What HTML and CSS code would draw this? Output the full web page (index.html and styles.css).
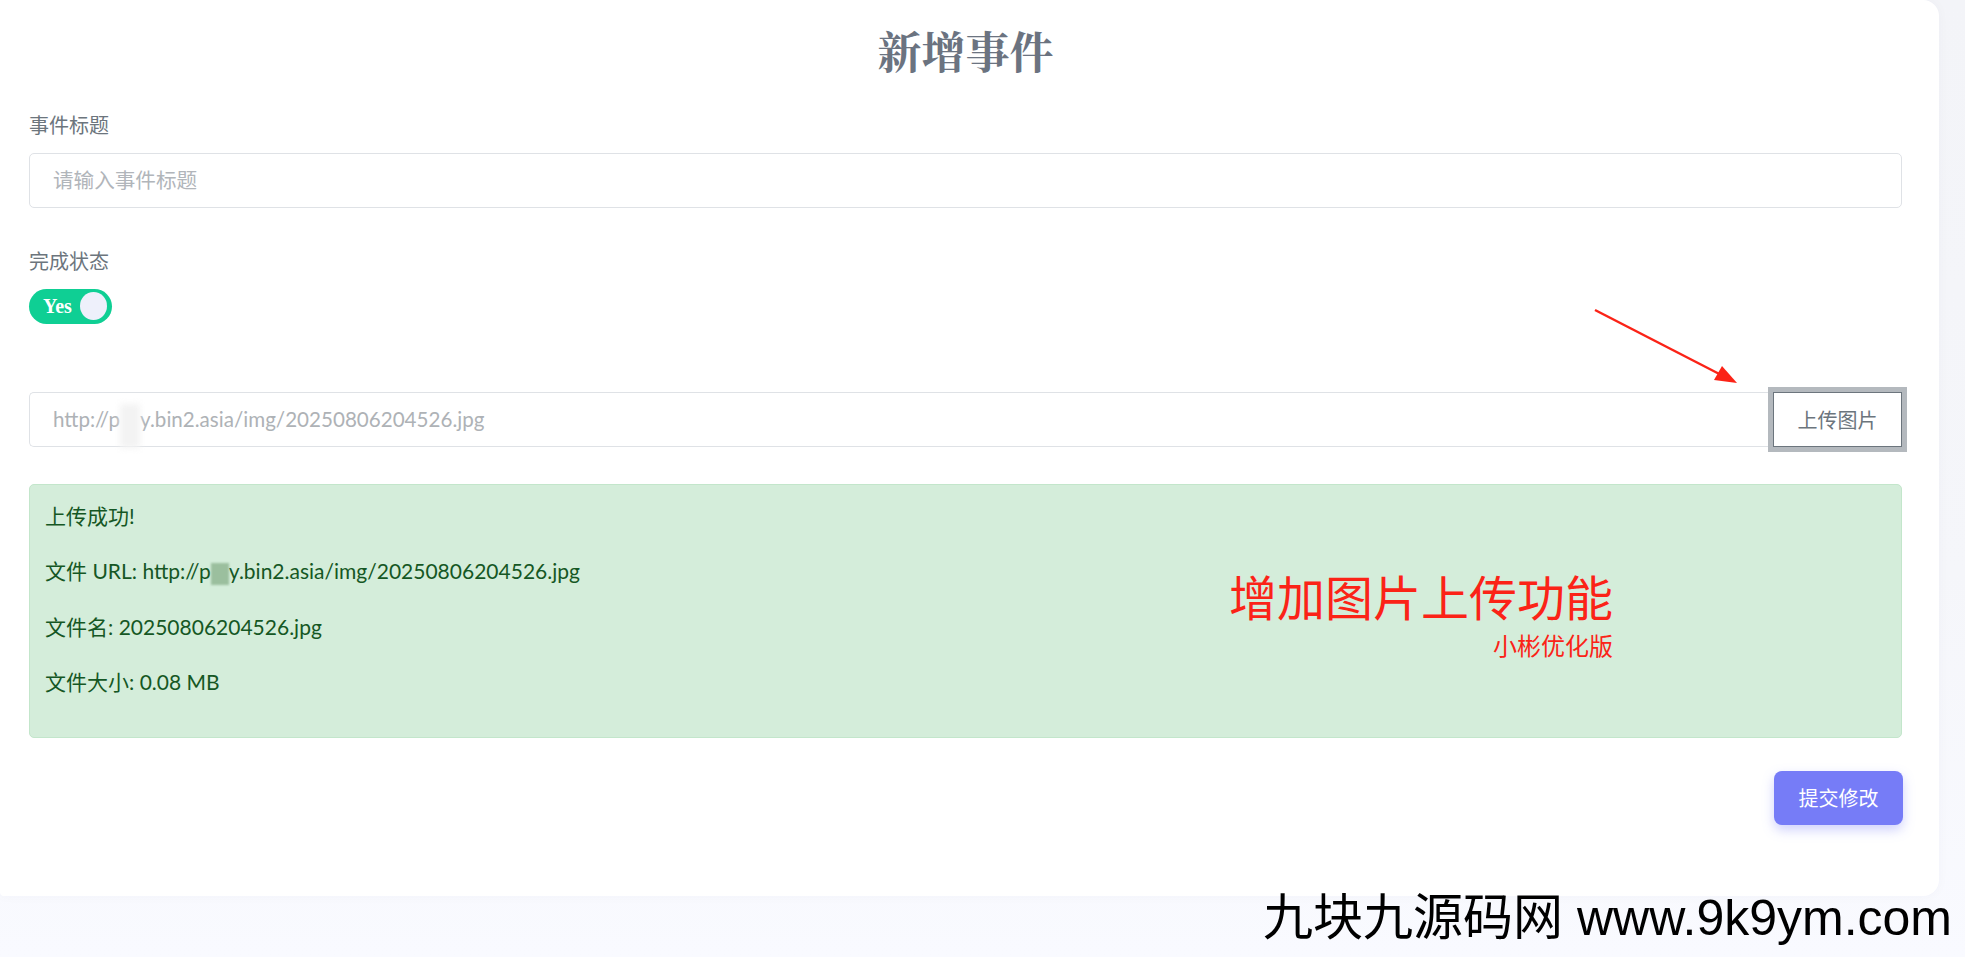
FILE: index.html
```html
<!DOCTYPE html>
<html lang="zh-CN">
<head>
	<meta charset="UTF-8">
	<title>新增事件</title>
	<link rel="stylesheet" href="styles.css">
</head>
<body>
	<div class="card">
		<h1 class="title">新增事件</h1>

		<div class="group">
			<label class="label" for="title">事件标题</label>
			<input class="input" id="title" type="text" placeholder="请输入事件标题">
		</div>

		<div class="group">
			<div class="label">完成状态</div>
			<div class="toggle">
				<span class="toggle-text">Yes</span>
				<span class="knob"></span>
			</div>
		</div>

		<div class="upload">
			<div class="input url">http://p<span class="mask mask-light"></span>y.bin2.asia/img/20250806204526.jpg</div>
			<button class="btn-upload" type="button">上传图片</button>
		</div>

		<div class="alert">
			<p>上传成功!</p>
			<p>文件 URL: http://p<span class="mask mask-green"></span>y.bin2.asia/img/20250806204526.jpg</p>
			<p>文件名: 20250806204526.jpg</p>
			<p>文件大小: 0.08 MB</p>

			<div class="note">
				<div class="note-main">增加图片上传功能</div>
				<div class="note-sub">小彬优化版</div>
			</div>
		</div>

		<div class="actions">
			<button class="btn-submit" type="button">提交修改</button>
		</div>

		<!-- annotation arrow pointing at the upload button -->
		<svg class="arrow" width="160" height="90" viewBox="0 0 160 90">
			<line x1="2" y1="2" x2="138" y2="72" stroke="#fb2317" stroke-width="2.5" />
			<polygon points="144,75 121,72 129,58" fill="#fb2317" />
		</svg>
	</div>

	<div class="watermark">九块九源码网 www.9k9ym.com</div>
</body>
</html>
```

FILE: styles.css
```css
html, body {
	margin: 0;
	padding: 0;
}
body {
	position: relative;
	min-height: 957px;
	font-family: "Lato", "Noto Sans CJK SC", sans-serif;
	background: linear-gradient(to bottom, #f3f4f8 0%, #f5f6fa 60%, #f9faff 100%);
	overflow: hidden;
}
.card {
	position: relative;
	box-sizing: border-box;
	width: 1939px;
	height: 896px;
	padding: 24px 37px 0 29px;
	background: #fff;
	border-radius: 0 16px 16px 4px;
	box-shadow: 0 0 12px rgba(40, 50, 90, 0.03);
}
.title {
	margin: 0;
	font-family: "Noto Serif CJK SC", "Noto Sans CJK SC", serif;
	font-size: 44px;
	line-height: 1.2;
	font-weight: 700;
	text-align: center;
	color: #6b7380;
}
.group {
	margin-top: 34px;
}
.group + .group {
	margin-top: 39px;
}
.label {
	display: block;
	font-family: "Noto Sans CJK SC", sans-serif;
	font-size: 20px;
	line-height: 28px;
	color: #6c757d;
}
.input {
	display: block;
	box-sizing: border-box;
	width: 100%;
	height: 55px;
	margin-top: 14px;
	padding: 0 23px;
	border: 1px solid #dfe2e6;
	border-radius: 5px;
	font-family: "Lato", "Noto Sans CJK SC", sans-serif;
	font-size: 20.6px;
	color: #495057;
	background: #fff;
	outline: none;
}
.input::placeholder {
	color: #b1b5ba;
}
.toggle {
	display: flex;
	align-items: center;
	justify-content: space-between;
	box-sizing: border-box;
	width: 83px;
	height: 35px;
	margin-top: 14px;
	padding: 0 5px 0 14px;
	border-radius: 18px;
	background: #0fcf94;
}
.toggle-text {
	font-family: "Liberation Serif", serif;
	font-weight: 700;
	font-size: 20px;
	color: #fff;
}
.knob {
	width: 27px;
	height: 28px;
	border-radius: 50%;
	background: #eef0fb;
}
.upload {
	display: flex;
	margin-top: 68px;
}
.url {
	flex: 1;
	display: flex;
	align-items: center;
	margin-top: 0;
	border-radius: 5px 0 0 5px;
	border-right: none;
	color: #aeb2b6;
}
.mask {
	display: inline-block;
	width: 18px;
	height: 22px;
	vertical-align: middle;
}
.mask-light {
	width: 20px;
	height: 44px;
	margin-top: 14px;
	background: #f3f3f3;
	filter: blur(3px);
}
.mask-green {
	background: #9bbf9e;
	filter: blur(1px);
}
.btn-upload {
	box-sizing: border-box;
	width: 129px;
	height: 55px;
	border: 1px solid #6c757d;
	border-radius: 0;
	background: #fff;
	font-family: "Noto Sans CJK SC", sans-serif;
	font-size: 20px;
	color: #6c757d;
	box-shadow: 0 0 0 5px #b4b9be;
	cursor: pointer;
}
.alert {
	position: relative;
	margin-top: 37px;
	padding: 15px;
	border: 1px solid #c3e6cb;
	border-radius: 5px;
	background: #d4edda;
	color: #155724;
	font-size: 21px;
	line-height: 31.5px;
}
.alert p {
	margin: 0 0 24px;
}
.note {
	position: absolute;
	top: 86px;
	right: 288px;
	text-align: right;
	font-family: "Noto Sans CJK SC", sans-serif;
	color: #fb2317;
}
.note-main {
	font-size: 48px;
	line-height: 1;
}
.note-sub {
	margin-top: 14px;
	font-size: 24px;
	line-height: 1;
}
.actions {
	display: flex;
	justify-content: flex-end;
	margin-top: 33px;
	margin-right: -1px;
}
.btn-submit {
	width: 129px;
	height: 54px;
	border: none;
	border-radius: 8px;
	background: #767cf7;
	font-family: "Noto Sans CJK SC", sans-serif;
	font-size: 20px;
	color: #fff;
	box-shadow: 0 5px 12px rgba(118, 124, 247, 0.35);
	cursor: pointer;
}
.arrow {
	position: absolute;
	left: 1593px;
	top: 308px;
}
.watermark {
	position: absolute;
	right: 13px;
	top: 891px;
	font-family: "Liberation Sans", "Noto Sans CJK SC", sans-serif;
	font-size: 50px;
	line-height: 1.1;
	color: #000;
	white-space: nowrap;
}
```
